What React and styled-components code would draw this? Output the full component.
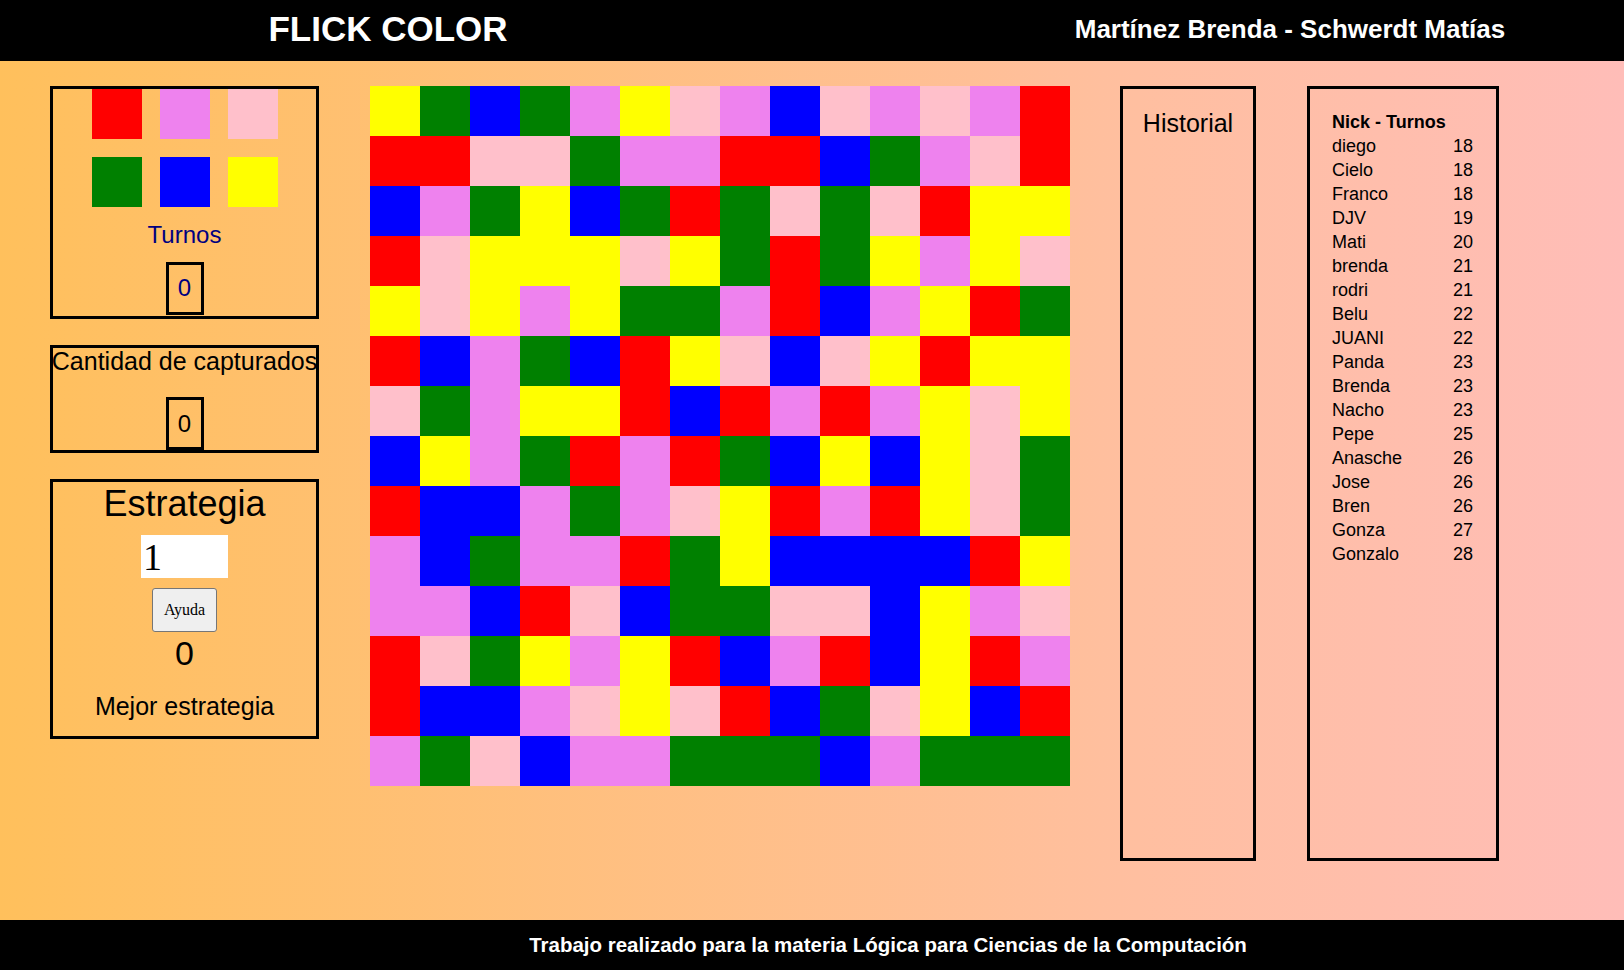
import React from "react";
import styled, { createGlobalStyle } from "styled-components";

const GlobalStyle = createGlobalStyle`
  * {
    box-sizing: border-box;
  }
  body {
    margin: 0;
    font-family: "Liberation Sans", Arial, sans-serif;
  }
`;

const COLORS = {
  R: "#ff0000",
  V: "#ee82ee",
  P: "#ffc0cb",
  G: "#008000",
  B: "#0000ff",
  Y: "#ffff00",
};

const BOARD = [
  "YGBGVYPVBPVPVR",
  "RRPPGVVRRBGVPR",
  "BVGYBGRGPGPRYY",
  "RPYYYPYGRGYVYP",
  "YPYVYGGVRBVYRG",
  "RBVGBRYPBPYRYY",
  "PGVYYRBRVRVYPY",
  "BYVGRVRGBYBYPG",
  "RBBVGVPYRVRYPG",
  "VBGVVRGYBBBBRY",
  "VVBRPBGGPPBYVP",
  "RPGYVYRBVRBYRV",
  "RBBVPYPRBGPYBR",
  "VGPBVVGGGBVGGG",
];

const RANKING = [
  ["diego", 18],
  ["Cielo", 18],
  ["Franco", 18],
  ["DJV", 19],
  ["Mati", 20],
  ["brenda", 21],
  ["rodri", 21],
  ["Belu", 22],
  ["JUANI", 22],
  ["Panda", 23],
  ["Brenda", 23],
  ["Nacho", 23],
  ["Pepe", 25],
  ["Anasche", 26],
  ["Jose", 26],
  ["Bren", 26],
  ["Gonza", 27],
  ["Gonzalo", 28],
];

const Page = styled.div`
  min-height: 100vh;
  display: flex;
  flex-direction: column;
  background: linear-gradient(to right, #ffc05c, #ffbfa0 70%, #ffbdb8);
`;

const Header = styled.header`
  height: 61px;
  padding-bottom: 3px;
  background: #000;
  color: #fff;
  display: grid;
  grid-template-columns: 776px 1fr 668px;
  align-items: center;
  text-align: center;
  font-weight: bold;
`;

const Title = styled.div`
  font-size: 35px;
`;

const Authors = styled.div`
  grid-column: 3;
  font-size: 26px;
`;

const Main = styled.main`
  flex: 1;
  display: flex;
  align-items: flex-start;
  padding: 25px 0 0 50px;
`;

const LeftCol = styled.div`
  width: 269px;
  margin-right: 51px;
  display: flex;
  flex-direction: column;
  gap: 26px;
`;

const Panel = styled.div`
  border: 3px solid #000;
  height: ${(p) => p.h}px;
  display: flex;
  flex-direction: column;
  align-items: center;
  justify-content: ${(p) => (p.spread ? "space-between" : "flex-start")};
  font-size: 24px;
  color: #000;
`;

const Palette = styled.div`
  display: grid;
  grid-template-columns: repeat(3, 50px);
  gap: 18px 18px;
`;

const Swatch = styled.div`
  width: 50px;
  height: 50px;
  background: ${(p) => p.color};
`;

const Label = styled.div`
  font-size: ${(p) => p.size || 24}px;
  color: ${(p) => p.color || "#000"};
  margin-top: ${(p) => p.mt || 0}px;
  line-height: 1.15;
  white-space: nowrap;
`;

const CountBox = styled.div`
  border: 3px solid #000;
  width: 38px;
  height: 53px;
  margin-top: ${(p) => p.mt || 0}px;
  display: flex;
  align-items: center;
  justify-content: center;
  font-size: 24px;
  color: ${(p) => p.color || "#000"};
`;

const StrategyInput = styled.input`
  width: 87px;
  height: 43px;
  margin-top: 11px;
  border: none;
  outline: none;
  padding: 0 2px;
  background: #fff;
  font-family: "Liberation Serif", "Times New Roman", serif;
  font-size: 38px;
  color: #000;
`;

const HelpButton = styled.button`
  margin-top: 10px;
  height: 44px;
  padding: 0 11px;
  background: #efefef;
  border: 1px solid #767676;
  border-radius: 3px;
  font-family: "Liberation Serif", "Times New Roman", serif;
  font-size: 16px;
  color: #000;
`;

const Board = styled.div`
  display: grid;
  grid-template-columns: repeat(14, 50px);
  grid-auto-rows: 50px;
  margin-right: 50px;
`;

const Cell = styled.div`
  background: ${(p) => p.color};
`;

const SideBox = styled.div`
  width: ${(p) => p.w}px;
  height: 775px;
  margin-right: ${(p) => p.mr || 0}px;
  border: 3px solid #000;
`;

const HistoryTitle = styled.div`
  text-align: center;
  font-size: 25px;
  padding-top: 20px;
  color: #000;
`;

const RankList = styled.div`
  padding: 21px 0 0 22px;
  display: grid;
  grid-template-columns: 121px auto;
  grid-auto-rows: 24px;
  font-size: 18px;
  line-height: 24px;
  color: #000;
`;

const RankHead = styled.div`
  grid-column: 1 / span 2;
  font-weight: bold;
`;

const Footer = styled.footer`
  height: 50px;
  background: #000;
  color: #fff;
  font-weight: bold;
  font-size: 20.5px;
  display: flex;
  align-items: center;
  justify-content: center;
  padding-left: 152px;
`;

const App = () => {
  return (
    <>
      <GlobalStyle />
      <Page>
        <Header>
          <Title>FLICK COLOR</Title>
          <Authors>Martínez Brenda - Schwerdt Matías</Authors>
        </Header>
        <Main>
          <LeftCol>
            <Panel h={233}>
              <Palette>
                {["R", "V", "P", "G", "B", "Y"].map((c) => (
                  <Swatch key={c} color={COLORS[c]} />
                ))}
              </Palette>
              <Label color="#000080" mt={14}>
                Turnos
              </Label>
              <CountBox color="#000080" mt={13}>
                0
              </CountBox>
            </Panel>
            <Panel h={108} spread>
              <Label size={25} mt={-1}>
                Cantidad de capturados
              </Label>
              <CountBox>0</CountBox>
            </Panel>
            <Panel h={260}>
              <Label size={36} mt={1}>
                Estrategia
              </Label>
              <StrategyInput defaultValue="1" />
              <HelpButton>Ayuda</HelpButton>
              <Label size={34} mt={2}>
                0
              </Label>
              <Label size={25} mt={19}>
                Mejor estrategia
              </Label>
            </Panel>
          </LeftCol>
          <Board>
            {BOARD.map((row, r) =>
              row
                .split("")
                .map((c, i) => <Cell key={r + "-" + i} color={COLORS[c]} />)
            )}
          </Board>
          <SideBox w={136} mr={51}>
            <HistoryTitle>Historial</HistoryTitle>
          </SideBox>
          <SideBox w={192}>
            <RankList>
              <RankHead>Nick - Turnos</RankHead>
              {RANKING.map(([name, turns], i) => (
                <React.Fragment key={i}>
                  <div>{name}</div>
                  <div>{turns}</div>
                </React.Fragment>
              ))}
            </RankList>
          </SideBox>
        </Main>
        <Footer>
          Trabajo realizado para la materia Lógica para Ciencias de la Computación
        </Footer>
      </Page>
    </>
  );
};

export default App;
